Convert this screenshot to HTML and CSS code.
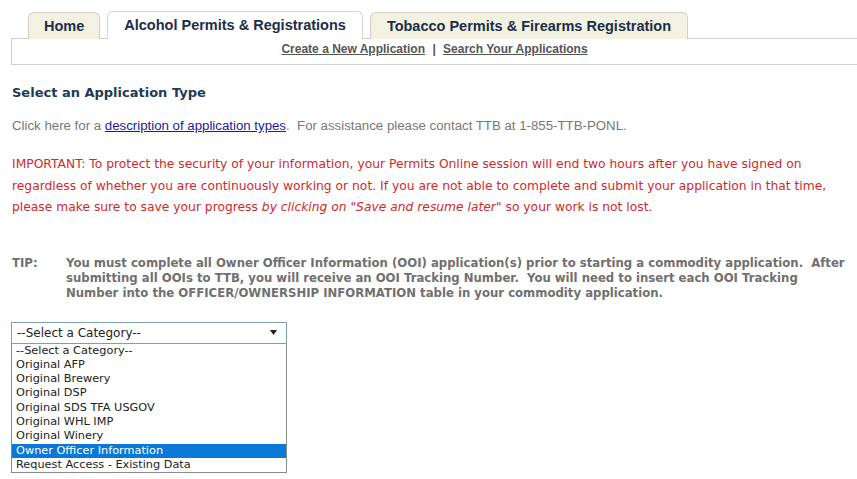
FILE: index.html
```html
<!DOCTYPE html>
<html lang="en">
<head>
    <meta charset="UTF-8">
    <meta name="viewport" content="width=device-width, initial-scale=1.0">
    <title>Permits Online - Select an Application Type</title>
    <link rel="stylesheet" href="styles.css">
</head>
<body>
    <div class="page">
        <div class="tabs">
            <div class="tab home">Home</div>
            <div class="tab active">Alcohol Permits &amp; Registrations</div>
            <div class="tab">Tobacco Permits &amp; Firearms Registration</div>
        </div>
        <div class="sub-nav">
            <a href="#">Create a New Application</a>
            <span class="sep">|</span>
            <a href="#">Search Your Applications</a>
        </div>

        <div class="content">
            <h2>Select an Application Type</h2>

            <p class="info">Click here for a <a href="#">description of application types</a>.&nbsp; For assistance please contact TTB at 1-855-TTB-PONL.</p>

            <p class="important">IMPORTANT: To protect the security of your information, your Permits Online session will end two hours after you have signed on regardless of whether you are continuously working or not. If you are not able to complete and submit your application in that time, please make sure to save your progress <em>by clicking on "Save and resume later"</em> so your work is not lost.</p>

            <div class="tip">
                <div class="tip-label">TIP:</div>
                <div class="tip-text">You must complete all Owner Officer Information (OOI) application(s) prior to starting a commodity application.&nbsp; After submitting all OOIs to TTB, you will receive an OOI Tracking Number.&nbsp; You will need to insert each OOI Tracking Number into the OFFICER/OWNERSHIP INFORMATION table in your commodity application.</div>
            </div>

            <div class="select-box">
                <div class="select-value">
                    <span>--Select a Category--</span>
                    <svg width="7" height="5" viewBox="0 0 7 5"><path d="M0 0h7L3.5 5z" fill="#222"/></svg>
                </div>
                <ul class="select-list">
                    <li>--Select a Category--</li>
                    <li>Original AFP</li>
                    <li>Original Brewery</li>
                    <li>Original DSP</li>
                    <li>Original SDS TFA USGOV</li>
                    <li>Original WHL IMP</li>
                    <li>Original Winery</li>
                    <li class="selected">Owner Officer Information</li>
                    <li>Request Access - Existing Data</li>
                </ul>
            </div>
        </div>
    </div>
</body>
</html>
```

FILE: styles.css
```css
* {
    margin: 0;
    padding: 0;
    box-sizing: border-box;
}

body {
    background-color: white;
    font-family: "Liberation Sans", Arial, sans-serif;
}

.page {
    padding: 11px 0 0 11px;
}

.tabs {
    display: flex;
    gap: 7px;
    padding-left: 17px;
    position: relative;
    z-index: 1;
}

.tab {
    height: 27px;
    padding: 0 16px;
    margin-top: 1px;
    margin-bottom: -1px;
    background-color: #f3f1e1;
    border: 1px solid #d2d0c4;
    border-bottom: none;
    border-radius: 6px 6px 0 0;
    font-size: 14.5px;
    font-weight: bold;
    color: #1b2e47;
    line-height: 26px;
}

.tab.home {
    padding: 0 15px;
}

.tab.active {
    background-color: white;
    height: 28px;
    margin-top: 0;
    border-color: #d4d4d4;
}

.sub-nav {
    height: 27px;
    border: 1px solid #cfcfcf;
    border-right: none;
    text-align: center;
    font-size: 12px;
    font-weight: bold;
    color: #555;
    line-height: 20px;
}

.sub-nav a {
    color: #555;
}

.sub-nav .sep {
    margin: 0 4px;
}

.content {
    padding-top: 20px;
}

h2 {
    font-family: "DejaVu Sans", Verdana, sans-serif;
    font-size: 13px;
    font-weight: bold;
    color: #1f3a56;
    margin-left: 1px;
}

.info {
    margin-top: 18px;
    font-size: 13.25px;
    color: #777;
    margin-left: 1px;
}

.info a {
    color: #1a1aa6;
}

.important {
    margin-top: 21px;
    font-family: "DejaVu Sans", Verdana, sans-serif;
    font-size: 12.3px;
    line-height: 21.5px;
    color: #d12a2a;
    margin-left: 1px;
    width: 835px;
}

.tip {
    display: flex;
    margin-top: 37px;
    font-family: "DejaVu Sans", Verdana, sans-serif;
    font-size: 11.7px;
    font-weight: bold;
    line-height: 15px;
    color: #707070;
}

.tip-label {
    width: 55px;
    padding-left: 1px;
    flex-shrink: 0;
}

.tip-text {
    width: 785px;
}

.select-box {
    margin-top: 21px;
    width: 276px;
    font-family: "DejaVu Sans", Verdana, sans-serif;
    font-size: 11.3px;
    color: #222;
}

.select-value {
    height: 22px;
    border: 1px solid #7f9db9;
    display: flex;
    align-items: center;
    justify-content: space-between;
    padding: 0 9px 0 5px;
    font-size: 12px;
}

.select-list {
    list-style: none;
    border: 1px solid #8a8a8a;
    border-top: none;
}

.select-list li {
    height: 14.3px;
    line-height: 14px;
    padding-left: 4px;
}

.select-list li.selected {
    background-color: #0a78d7;
    color: white;
}
```
